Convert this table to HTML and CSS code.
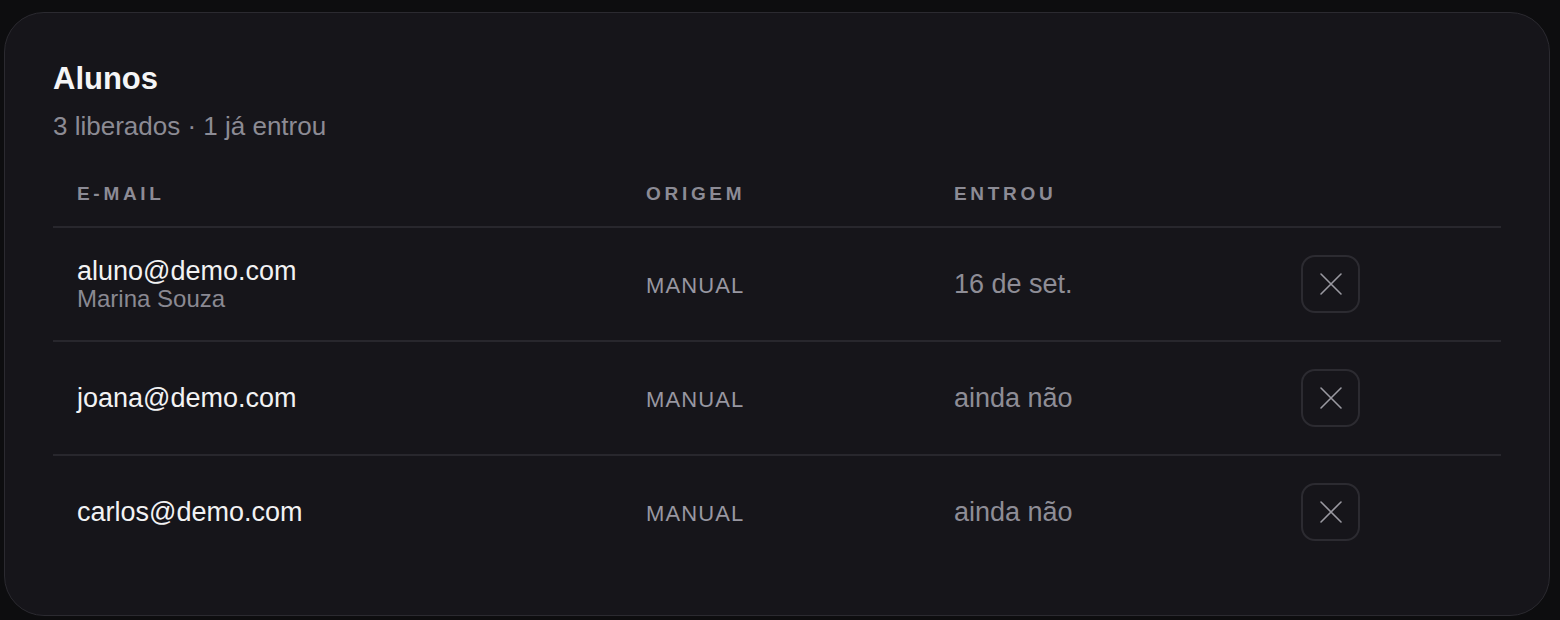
FILE: index.html
```html
<!DOCTYPE html>
<html lang="pt-BR">
<head>
    <meta charset="UTF-8">
    <meta name="viewport" content="width=device-width, initial-scale=1.0">
    <title>Alunos</title>
    <link rel="stylesheet" href="styles.css">
</head>
<body>
    <div class="card">
        <h1>Alunos</h1>
        <p class="summary">3 liberados · 1 já entrou</p>

        <table class="students">
            <colgroup>
                <col class="col-email">
                <col class="col-origin">
                <col class="col-joined">
                <col>
            </colgroup>
            <thead>
                <tr>
                    <th>E-mail</th>
                    <th>Origem</th>
                    <th>Entrou</th>
                    <th></th>
                </tr>
            </thead>
            <tbody>
                <tr>
                    <td>
                        <div class="email">aluno@demo.com</div>
                        <div class="name">Marina Souza</div>
                    </td>
                    <td class="origin">MANUAL</td>
                    <td class="joined">16 de set.</td>
                    <td><button class="remove" title="Remover"><svg viewBox="0 0 26 26" width="26" height="26"><path d="M3 3 L23 23 M23 3 L3 23"/></svg></button></td>
                </tr>
                <tr>
                    <td><div class="email">joana@demo.com</div></td>
                    <td class="origin">MANUAL</td>
                    <td class="joined">ainda não</td>
                    <td><button class="remove" title="Remover"><svg viewBox="0 0 26 26" width="26" height="26"><path d="M3 3 L23 23 M23 3 L3 23"/></svg></button></td>
                </tr>
                <tr>
                    <td><div class="email">carlos@demo.com</div></td>
                    <td class="origin">MANUAL</td>
                    <td class="joined">ainda não</td>
                    <td><button class="remove" title="Remover"><svg viewBox="0 0 26 26" width="26" height="26"><path d="M3 3 L23 23 M23 3 L3 23"/></svg></button></td>
                </tr>
            </tbody>
        </table>
    </div>
</body>
</html>
```

FILE: styles.css
```css
body {
    margin: 0;
    padding: 12px 10px 0 4px;
    background: #0d0d0f;
    font-family: "Liberation Sans", Arial, sans-serif;
    color: #f2f2f3;
}
.card {
    background: #16151a;
    border: 1px solid #2b2a30;
    border-radius: 40px;
    padding: 46px 48px 47px 48px;
}
h1 {
    margin: 0;
    font-size: 31px;
    line-height: 40px;
    font-weight: bold;
    color: #f5f5f6;
}
.summary {
    margin: 11px 0 0;
    font-size: 26px;
    line-height: 32px;
    color: #8c8b94;
}
.students {
    width: 100%;
    border-collapse: collapse;
    margin-top: 21px;
}
.col-email {
    width: 569px;
}
.col-origin {
    width: 308px;
}
.col-joined {
    width: 347px;
}
.students th {
    text-align: left;
    font-size: 19px;
    line-height: 24px;
    font-weight: bold;
    letter-spacing: 3.7px;
    text-transform: uppercase;
    color: #8c8b95;
    padding: 19px 24px 20px;
    border-bottom: 2px solid #28272d;
}
.students td {
    padding: 27px 24px;
    vertical-align: middle;
    border-bottom: 2px solid #28272d;
}
.students tbody tr:last-child td {
    border-bottom: none;
}
.email {
    font-size: 27px;
    line-height: 30px;
    color: #f2f2f3;
}
.name {
    font-size: 24px;
    line-height: 26px;
    color: #8a8992;
}
.students td.origin {
    padding-top: 31px;
    font-size: 22px;
    letter-spacing: 1.1px;
    color: #9897a1;
}
.joined {
    font-size: 27px;
    color: #8e8d96;
}
.remove {
    width: 59px;
    height: 58px;
    display: flex;
    align-items: center;
    justify-content: center;
    background: transparent;
    border: 2px solid #2c2b31;
    border-radius: 14px;
    padding: 0;
    cursor: pointer;
}
.remove svg {
    fill: none;
    stroke: #9a99a1;
    stroke-width: 1.6;
    stroke-linecap: round;
}
```
